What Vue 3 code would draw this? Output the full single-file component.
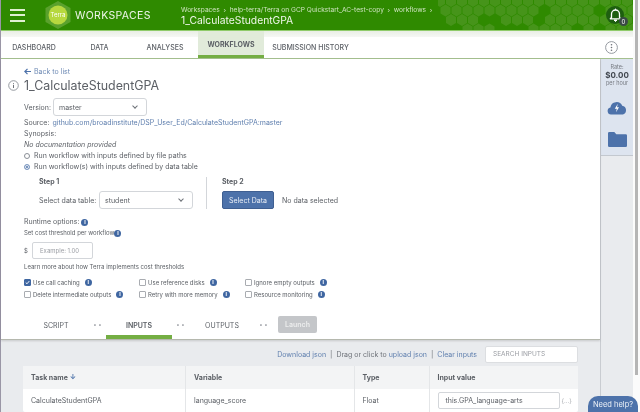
<template>
	<div class="page">
		<div class="app">
			<header class="topbar">
				<svg class="hexes" width="200" height="30" viewBox="0 0 200 30">
					<path v-for="h in hexes" :key="h.id" :d="h.d" fill="#46941a" />
				</svg>
				<div class="burger"><span></span><span></span><span></span></div>
				<div class="logo">
					<svg width="28" height="30" viewBox="0 0 28 30">
						<path d="M14 1l12.500 7v14L14 29 1.500 22V8z" fill="#5aa12d" />
						<circle cx="14" cy="15" r="9.500" fill="#b6d83e" />
						<text x="14" y="17.300" text-anchor="middle" class="logo_text">Terra</text>
					</svg>
				</div>
				<div class="brand">WORKSPACES</div>
				<div class="crumbs">
					<div class="crumb_path">Workspaces &nbsp;›&nbsp; help-terra/Terra on GCP Quickstart_AC-test-copy &nbsp;›&nbsp; workflows &nbsp;›</div>
					<div class="crumb_name">1_CalculateStudentGPA</div>
				</div>
				<div class="bell">
					<svg width="13" height="14" viewBox="0 0 13 14">
						<path d="M2.500 9.500V6a4 4 0 0 1 8 0v3.500l1.200 1.300H1.300z" fill="none" stroke="#fff" stroke-width="1.300" stroke-linejoin="round" />
						<path d="M6.500 0.600v1.400M5 12h3l-1.500 1.500z" stroke="#fff" fill="#fff" stroke-width="1" />
					</svg>
					<span class="bell_count">0</span>
				</div>
			</header>

			<nav class="nav">
				<div class="tab" style="width: 66px">DASHBOARD</div>
				<div class="tab" style="width: 65px">DATA</div>
				<div class="tab" style="width: 66px">ANALYSES</div>
				<div class="tab tab_active" style="width: 66px">WORKFLOWS</div>
				<div class="tab" style="width: 93px">SUBMISSION HISTORY</div>
				<div class="nav_space"></div>
				<div class="nav_more">
					<svg width="13" height="13" viewBox="0 0 13 13">
						<circle cx="6.500" cy="6.500" r="5.900" fill="none" stroke="#8a8f96" stroke-width="0.900" />
						<circle cx="6.500" cy="3.700" r="0.800" fill="#6d7178" />
						<circle cx="6.500" cy="6.500" r="0.800" fill="#6d7178" />
						<circle cx="6.500" cy="9.300" r="0.800" fill="#6d7178" />
					</svg>
				</div>
			</nav>

			<div class="body">
				<main class="main">
					<section class="form">
						<div class="back">
							<svg width="7" height="7" viewBox="0 0 7 7"><path d="M3.500 0.800L0.800 3.500l2.700 2.700M1 3.500h6" fill="none" stroke="#4d72aa" stroke-width="1.200" /></svg>
							Back to list
						</div>
						<div class="title_row">
							<svg width="11" height="11" viewBox="0 0 11 11">
								<circle cx="5.500" cy="5.500" r="4.800" fill="none" stroke="#8a8f96" stroke-width="0.900" />
								<path d="M5.500 3v0.800M5.500 4.800v3.200" stroke="#6d7178" stroke-width="1" />
							</svg>
							<h1>1_CalculateStudentGPA</h1>
						</div>
						<div class="version_row">
							<span class="version_label">Version:</span>
							<div class="select select_version">master<i class="chev"></i></div>
						</div>
						<div class="line source">Source: <a>github.com/broadinstitute/DSP_User_Ed/CalculateStudentGPA:master</a></div>
						<div class="line">Synopsis:</div>
						<div class="line"><em>No documentation provided</em></div>
						<label class="line radio_row"><span class="radio"></span>Run workflow with inputs defined by file paths</label>
						<label class="line radio_row"><span class="radio radio_on"></span>Run workflow(s) with inputs defined by data table</label>

						<div class="steps">
							<div class="step_one">
								<div class="step_head">Step 1</div>
								<div class="step_body">
									<span class="table_label">Select data table:</span>
									<div class="select select_table">student<i class="chev"></i></div>
								</div>
							</div>
							<div class="step_two">
								<div class="step_head">Step 2</div>
								<div class="step_body">
									<button class="select_data">Select Data</button>
									<span>No data selected</span>
								</div>
							</div>
						</div>

						<div class="runtime">Runtime options: <span class="info">i</span></div>
						<div class="small">Set cost threshold per workflow<span class="info">i</span></div>
						<div class="cost_row">
							<span class="dollar">$</span>
							<div class="cost_input">Example: 1.00</div>
						</div>
						<div class="small learn">Learn more about how Terra implements cost thresholds</div>

						<div class="options">
							<div v-for="opt in options" :key="opt.name" class="option">
								<span class="check" :class="{ check_on: opt.on }">
									<svg v-if="opt.on" width="7" height="7" viewBox="0 0 7 7"><path d="M1 3.500l1.800 1.800L6 1.500" fill="none" stroke="#fff" stroke-width="1.300" /></svg>
								</span>
								<span>{{ opt.name }}</span>
								<span class="info opt_info">i</span>
							</div>
						</div>

						<div class="wf_tabs">
							<div class="wf_tab" style="width: 66px">SCRIPT</div>
							<div class="wf_dots">• •</div>
							<div class="wf_tab wf_tab_active" style="width: 66px">INPUTS</div>
							<div class="wf_dots">• •</div>
							<div class="wf_tab" style="width: 66px">OUTPUTS</div>
							<div class="wf_dots">• •</div>
							<button class="launch">Launch</button>
						</div>
					</section>

					<section class="inputs">
						<div class="tools">
							<a>Download json</a><span class="sep">|</span>
							<span><a class="plain">Drag or click to</a> <a>upload json</a></span><span class="sep">|</span>
							<a>Clear inputs</a>
							<div class="search">SEARCH INPUTS</div>
						</div>
						<div class="table">
							<div class="t_row t_head">
								<div class="c1">Task name <span class="sort">↓</span></div>
								<div class="c2">Variable</div>
								<div class="c3">Type</div>
								<div class="c4">Input value</div>
							</div>
							<div class="t_row">
								<div class="c1">CalculateStudentGPA</div>
								<div class="c2">language_score</div>
								<div class="c3">Float</div>
								<div class="c4">
									<div class="value_box">this.GPA_language-arts</div>
									<span class="dots">{...}</span>
								</div>
							</div>
						</div>
					</section>
				</main>

				<aside class="side">
					<div class="side_top">
						<div class="rate">Rate:</div>
						<div class="rate_value">$0.00</div>
						<div class="rate">per hour</div>
						<svg class="cloud" width="20" height="15" viewBox="0 0 20 15">
							<path d="M4 14.500a3.600 3.600 0 0 1-.6-7.100A6.200 6.200 0 0 1 15.200 5.800 4.500 4.500 0 0 1 16 14.500z" fill="#4d72aa" />
							<path d="M10.800 3.800L7.800 8.800h2l-.8 3.500 3-5h-2z" fill="#fff" />
						</svg>
						<svg class="folder" width="19" height="15" viewBox="0 0 19 15">
							<path d="M0 1.300A1.300 1.300 0 0 1 1.300 0h5l2 2.200h9.400A1.300 1.300 0 0 1 19 3.500v10.200a1.300 1.300 0 0 1-1.300 1.300H1.300A1.300 1.300 0 0 1 0 13.700z" fill="#4d72aa" />
						</svg>
					</div>
				</aside>
			</div>
		</div>
		<div class="scroll"><div class="scroll_thumb"></div></div>
		<div class="help">Need help?</div>
	</div>
</template>

<script setup>
const options = [
	{ name: 'Use call caching', on: true },
	{ name: 'Use reference disks', on: false },
	{ name: 'Ignore empty outputs', on: false },
	{ name: 'Delete intermediate outputs', on: false },
	{ name: 'Retry with more memory', on: false },
	{ name: 'Resource monitoring', on: false }
];

// honeycomb in the header, some cells are left empty
const skipped = ['2-4', '2-5', '2-9', '1-9', '2-0', '3-0', '3-1', '3-5', '3-6', '3-7', '1-14', '3-12', '3-14'];
const hexes = [];
for (let row = 0; row < 4; row++) {
	for (let col = 0; col < 18; col++) {
		if (skipped.includes(row + '-' + col)) continue;
		const x = col * 11 + (row % 2 ? 5.5 : 0) + 2;
		const y = row * 9.5 + 1;
		hexes.push({
			id: row + '-' + col,
			d: `M${x} ${y - 6}l5 3v6l-5 3-5-3v-6z`
		});
	}
}
</script>

<style>
html,
body {
	margin: 0;
	overflow: hidden;
}
</style>

<style scoped>
* {
	box-sizing: border-box;
}
.page {
	position: relative;
	display: flex;
	width: 640px;
	height: 412px;
	overflow: hidden;
	font-family: Inter, "Open Sans", sans-serif;
	font-size: 7px;
	color: #5c6066;
	background: #fff;
	filter: blur(0.3px);
}
.app {
	width: 633px;
	height: 412px;
	display: flex;
	flex-direction: column;
	border-left: 1px solid #9a96a6;
}
.scroll {
	width: 7px;
	background: #fbfbfb;
	padding-left: 2px;
}
.scroll_thumb {
	width: 3px;
	height: 375px;
	background: #b5b5b5;
}
.topbar {
	position: relative;
	flex: none;
	height: 31px;
	display: flex;
	align-items: center;
	background: #2f8a00;
	border-bottom: 1px solid #8fcb6a;
	color: #fff;
	overflow: hidden;
}
.hexes {
	position: absolute;
	top: 0;
	left: 437px;
}
.burger {
	position: relative;
	width: 15px;
	margin-left: 9px;
	display: flex;
	flex-direction: column;
	gap: 3.500px;
}
.burger span {
	height: 2px;
	background: #dff0d2;
}
.logo {
	position: relative;
	width: 28px;
	height: 30px;
	margin-left: 19px;
}
.logo_text {
	font-size: 6px;
	fill: #fff;
	font-family: Inter, sans-serif;
}
.brand {
	position: relative;
	margin-left: 3px;
	width: 106px;
	font-size: 10.500px;
	letter-spacing: 0.350px;
	color: #eef6e8;
}
.crumbs {
	position: relative;
	line-height: 10px;
}
.crumb_path {
	font-size: 6.600px;
	color: #cfe4c0;
	white-space: nowrap;
}
.crumb_name {
	font-size: 10.300px;
	color: #f0f7ea;
	line-height: 10px;
}
.bell {
	position: absolute;
	left: 605px;
	top: 6px;
	width: 18px;
	height: 18px;
	border-radius: 50%;
	background: #1e5f10;
	display: flex;
	align-items: center;
	justify-content: center;
}
.bell_count {
	position: absolute;
	left: 13px;
	top: 11px;
	width: 9px;
	height: 9px;
	border-radius: 50%;
	background: #3a4a45;
	font-size: 6px;
	line-height: 9px;
	text-align: center;
}
.nav {
	flex: none;
	height: 28px;
	display: flex;
	align-items: stretch;
	background: linear-gradient(#e9eee5 0, #f6f7f5 6px, #fff 6px);
	border-bottom: 1px solid #a5c08f;
}
.tab {
	display: flex;
	align-items: center;
	justify-content: center;
	padding-top: 6px;
	font-size: 7px;
	font-weight: 500;
	white-space: nowrap;
}
.tab_active {
	background: #e1ebda;
	border-bottom: 3px solid #74ae43;
	padding-top: 3px;
	font-weight: 700;
}
.nav_space {
	flex: 1;
}
.nav_more {
	display: flex;
	align-items: center;
	padding: 6px 15px 0 0;
}
.body {
	flex: 1;
	display: flex;
	min-height: 0;
}
.main {
	width: 599px;
	display: flex;
	flex-direction: column;
}
.form {
	height: 281px;
	padding: 7px 0 0 23px;
	background: #fff;
	border-bottom: 1.500px solid #b5b8ae;
	box-shadow: 0 1px 2px rgba(0, 0, 0, 0.15);
	position: relative;
}
.back {
	display: flex;
	align-items: center;
	gap: 3px;
	height: 11px;
	color: #6f8bb5;
}
.title_row {
	display: flex;
	align-items: center;
	height: 17px;
	margin-left: -16px;
}
.title_row h1 {
	margin: 0 0 0 5px;
	font-size: 12.400px;
	font-weight: 400;
}
.version_row {
	display: flex;
	align-items: center;
	height: 18px;
	margin-top: 4px;
}
.version_label {
	width: 29px;
}
.select {
	position: relative;
	display: flex;
	align-items: center;
	height: 18px;
	padding-left: 5px;
	font-size: 7px;
	background: #fff;
	border: 1px solid #d3d6da;
	border-radius: 3px;
}
.select_version,
.select_table {
	width: 94px;
}
.table_label {
	width: 60px;
}
.chev {
	position: absolute;
	right: 9px;
	top: 5px;
	width: 4px;
	height: 4px;
	border-right: 1px solid #6d7178;
	border-bottom: 1px solid #6d7178;
	transform: rotate(45deg);
}
.line {
	display: flex;
	align-items: center;
	gap: 3px;
	height: 11px;
	white-space: nowrap;
}
.source {
	height: 12px;
}
.source a {
	color: #5f7fae;
}
.radio_row {
	gap: 4px;
}
.radio {
	width: 6px;
	height: 6px;
	border-radius: 50%;
	border: 1px solid #8a8f96;
	background: #fff;
}
.radio_on {
	background: #4d72aa;
	box-shadow: inset 0 0 0 1px #fff;
	border-color: #86a0c5;
}
.steps {
	display: flex;
	margin: 5px 0 0 15px;
	height: 32px;
}
.step_one {
	width: 168px;
	border-right: 1px solid #d3d6da;
}
.step_two {
	padding-left: 15px;
}
.step_head {
	height: 10px;
	line-height: 10px;
	font-weight: 700;
	font-size: 7px;
}
.step_body {
	display: flex;
	align-items: center;
	margin-top: 4px;
	white-space: nowrap;
}
.select_data {
	width: 52px;
	height: 18px;
	margin-right: 8px;
	padding: 0;
	border: 1px solid #3f5f91;
	border-radius: 2px;
	background: #4d72aa;
	color: #e9eef6;
	font: inherit;
}
.runtime {
	margin-top: 7px;
	height: 11px;
	line-height: 11px;
}
.info {
	display: inline-block;
	width: 7px;
	height: 7px;
	line-height: 7px;
	border-radius: 50%;
	background: #3f66a1;
	color: #fff;
	font-size: 5.500px;
	font-weight: 700;
	text-align: center;
	vertical-align: 0.500px;
}
.small {
	margin-top: 1px;
	height: 10px;
	line-height: 10px;
	font-size: 6px;
}
.cost_row {
	display: flex;
	align-items: center;
	margin-top: 3px;
	height: 18px;
	font-size: 6px;
}
.dollar {
	width: 8px;
}
.cost_input {
	width: 61px;
	height: 17px;
	line-height: 15px;
	padding-left: 7px;
	border: 1px solid #d3d6da;
	border-radius: 2px;
	color: #9a9da3;
	font-size: 6px;
}
.learn {
	margin-top: 3px;
}
.options {
	display: grid;
	grid-template-columns: 115px 106px auto;
	grid-auto-rows: 12px;
	margin-top: 4px;
	font-size: 6px;
}
.option {
	display: flex;
	align-items: center;
	gap: 2px;
	white-space: nowrap;
}
.opt_info {
	margin-left: 3px;
}
.check {
	width: 7px;
	height: 7px;
	border: 1px solid #a9acb1;
	border-radius: 1px;
	display: flex;
	align-items: center;
	justify-content: center;
}
.check_on {
	background: #3f66a1;
	border-color: #3f66a1;
}
.wf_tabs {
	display: flex;
	align-items: center;
	position: absolute;
	left: 22px;
	bottom: 0;
	height: 29px;
}
.wf_tab {
	height: 29px;
	padding-top: 2px;
	display: flex;
	align-items: center;
	justify-content: center;
	font-size: 7px;
}
.wf_tab_active {
	font-weight: 600;
	border-bottom: 4px solid #74ae43;
	padding-top: 6px;
}
.wf_dots {
	width: 17px;
	text-align: center;
	color: #9a9da3;
	font-size: 6px;
	white-space: nowrap;
}
.launch {
	width: 39px;
	height: 17px;
	margin-left: 6px;
	padding: 0;
	border: none;
	border-radius: 2px;
	background: #c4c6c9;
	color: #eceded;
	font: inherit;
	font-size: 7px;
	font-weight: 600;
}
.inputs {
	flex: 1;
	padding: 0 22px;
	background: #e9ebee;
}
.tools {
	display: flex;
	align-items: center;
	justify-content: flex-end;
	gap: 3px;
	height: 26px;
	padding-top: 3px;
	color: #5f7fae;
	white-space: nowrap;
}
.tools .plain {
	color: #6d7178;
}
.sep {
	color: #6d7178;
	padding: 0 1px;
}
.search {
	width: 93px;
	height: 17px;
	margin-left: 5px;
	padding-left: 7px;
	line-height: 15px;
	background: #fff;
	border: 1px solid #dcdee1;
	border-radius: 2px;
	color: #9a9da3;
	font-size: 6.500px;
}
.table {
	background: #fff;
	border-radius: 2px;
}
.t_row {
	display: flex;
	height: 23px;
}
.t_head {
	background: #f3f4f5;
	font-weight: 700;
}
.t_row > div {
	flex: none;
	display: flex;
	align-items: center;
	padding-left: 8px;
	border-right: 1px solid #e4e6e8;
	white-space: nowrap;
}
.t_row > div:last-child {
	border-right: none;
}
.sort {
	margin-left: 2px;
	color: #4d72aa;
}
.c1 {
	width: 163px;
}
.c2 {
	width: 168.500px;
}
.c3 {
	width: 75px;
}
.c4 {
	width: 148px;
}
.value_box {
	width: 122px;
	height: 17px;
	line-height: 15px;
	padding-left: 7px;
	background: #fff;
	border: 1px solid #d3d6da;
	border-radius: 2px;
}
.dots {
	margin-left: 2px;
	color: #a9acb1;
	font-size: 6px;
}
.side {
	flex: 1;
	background: #e9ebee;
	border-left: 1px solid #c9ccd1;
}
.side_top {
	height: 97px;
	padding-top: 5px;
	display: flex;
	flex-direction: column;
	align-items: center;
	background: #dde4ef;
	border-bottom: 1px solid #c3c8cf;
}
.rate {
	height: 7px;
	line-height: 7px;
	font-size: 5.500px;
	color: #777b82;
}
.rate_value {
	height: 9px;
	line-height: 9px;
	font-size: 8px;
	font-weight: 700;
	color: #3f454d;
}
.cloud {
	margin-top: 13px;
}
.folder {
	margin-top: 17px;
}
.help {
	position: absolute;
	left: 588px;
	top: 396px;
	width: 50px;
	height: 20px;
	padding-top: 4px;
	border-radius: 10px 10px 0 0;
	background: #4d72aa;
	color: #eef2f8;
	font-size: 7.500px;
	text-align: center;
}
</style>
